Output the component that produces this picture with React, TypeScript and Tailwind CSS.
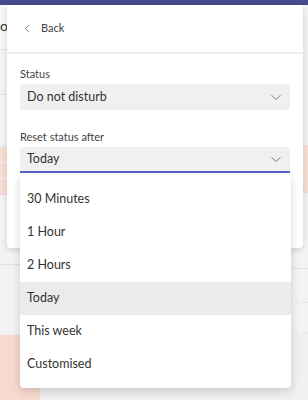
import React from 'react';

const FONT = { fontFamily: 'Lato, "Open Sans", sans-serif' };

const OPTIONS = ['30 Minutes', '1 Hour', '2 Hours', 'Today', 'This week', 'Customised'];

const Chevron: React.FC<{ className?: string }> = ({ className }) => (
  <svg viewBox="0 0 16 16" className={className} fill="none" stroke="currentColor" strokeWidth="1.1">
    <path d="M3 6l5 5 5-5" />
  </svg>
);

export default function App() {
  const selected = 'Today';

  return (
    <div className="relative w-[308px] h-[400px] overflow-hidden bg-[#f3f3f3] text-[#333333]" style={FONT}>
      {/* page behind the popover */}
      <div className="h-[5px] bg-[#474a8d]" />
      <div className="flex h-[395px]">
        <div className="w-[40px] flex flex-col">
          <div className="h-[45px] border-b border-[#e1e1e1] bg-[#f7f7f7] pt-[14px] text-[14px] leading-none">o</div>
          <div className="h-[45px] border-b border-[#e1e1e1]" />
          <div className="h-[52px] border-b border-[#e6e6e6]" />
          <div className="h-[16px] bg-[#f7dcd2] border-b border-[#f0efee]" />
          <div className="h-[16px] bg-[#f7dcd2] border-b border-[#f0efee]" />
          <div className="h-[16px] bg-[#f7dcd2] border-b border-[#e1e1e1]" />
          <div className="h-[70px] border-b border-[#e1e1e1]" />
          <div className="h-[70px]" />
          <div className="flex-1 bg-[#f6d9cf]" />
        </div>
        <div className="flex-1 flex flex-col">
          <div className="h-[140px]" />
          <div className="h-[48px] bg-[#f7dcd2] border-b border-[#e1e1e1]" />
          <div className="h-[76px] border-b border-[#e1e1e1]" />
          <div className="h-[34px] border-b border-dashed border-[#e4e4e4]" />
          <div className="h-[30px] border-b border-dashed border-[#e4e4e4]" />
          <div className="flex-1 bg-[#f0f0f0]" />
        </div>
      </div>

      {/* popover panel */}
      <div className="absolute left-[7px] top-[5px] w-[296px] h-[243px] rounded-b-[4px] bg-white shadow-[0_2px_6px_rgba(0,0,0,0.14)]">
        <div className="h-[47px] flex items-center pl-[15px] gap-[8px] text-[11px] text-[#424242]">
          <svg viewBox="0 0 16 16" className="w-[11px] h-[11px]" fill="none" stroke="#616161" strokeWidth="1.1">
            <path d="M10 3L5 8l5 5" />
          </svg>
          <span>Back</span>
        </div>
        <div className="h-[2px] bg-[#efefef]" />
        <div className="px-[13px] pt-[12px]">
          <div className="text-[11px] leading-[16px] text-[#424242]">Status</div>
          <div className="mt-[2px] h-[26px] rounded-[3px] bg-[#f0f0f0] flex items-center justify-between pl-[7px] pr-[7px] text-[12.5px]">
            <span>Do not disturb</span>
            <Chevron className="w-[14px] h-[14px] text-[#757575]" />
          </div>
          <div className="mt-[19px] text-[11px] leading-[16px] text-[#424242]">Reset status after</div>
          <div className="mt-[2px] h-[26px] rounded-t-[3px] bg-[#f0f0f0] border-b-2 border-[#5b5fc7] flex items-center justify-between pl-[7px] pr-[7px] text-[12.5px]">
            <span>Today</span>
            <Chevron className="w-[14px] h-[14px] text-[#757575]" />
          </div>
        </div>
      </div>

      {/* dropdown list */}
      <div className="absolute left-[20px] top-[175px] w-[271px] h-[213px] rounded-[4px] bg-white pt-[8px] shadow-[0_3px_8px_rgba(0,0,0,0.16)]">
        {OPTIONS.map((opt) => (
          <div
            key={opt}
            className={`h-[33px] flex items-center pl-[7px] text-[12.5px] ${opt === selected ? 'bg-[#ebebeb]' : ''}`}
          >
            {opt}
          </div>
        ))}
      </div>
    </div>
  );
}
